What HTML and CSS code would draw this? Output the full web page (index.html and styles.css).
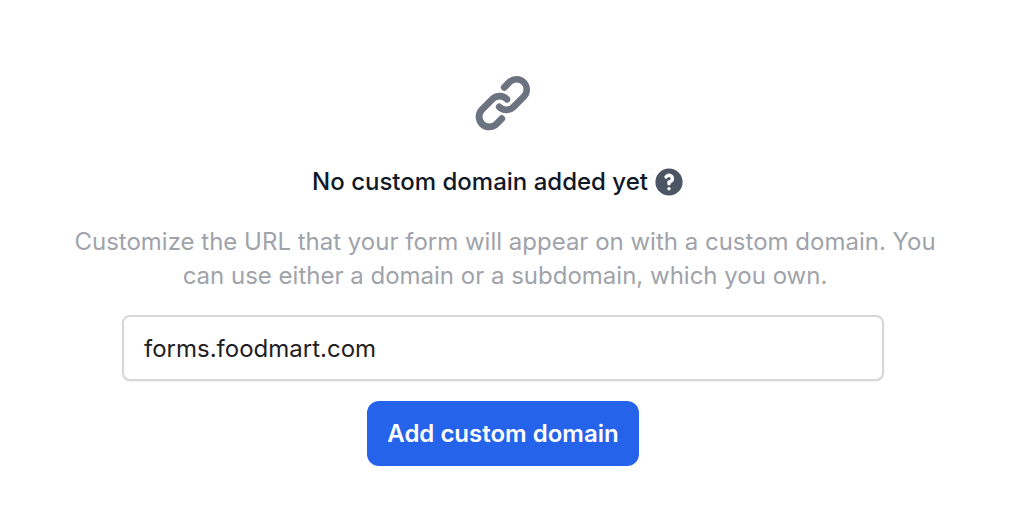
FILE: index.html
```html
<!DOCTYPE html>
<html lang="en">
<head>
<meta charset="utf-8">
<title>Custom domain</title>
<meta name="viewport" content="width=device-width, initial-scale=1">
<link rel="stylesheet" href="styles.css">
</head>
<body>
<main class="empty-state">
  <svg class="link-icon" viewBox="0 0 20 20" aria-hidden="true"><path fill-rule="evenodd" clip-rule="evenodd" d="M12.586 4.586a2 2 0 112.828 2.828l-3 3a2 2 0 01-2.828 0 1 1 0 00-1.414 1.414 4 4 0 005.656 0l3-3a4 4 0 00-5.656-5.656l-1.5 1.5a1 1 0 101.414 1.414l1.5-1.5zm-5 5a2 2 0 012.828 0 1 1 0 101.414-1.414 4 4 0 00-5.656 0l-3 3a4 4 0 105.656 5.656l1.5-1.5a1 1 0 10-1.414-1.414l-1.5 1.5a2 2 0 11-2.828-2.828l3-3z"/></svg>
  <div class="heading">
    <h1 class="title">No custom domain added yet</h1>
    <button class="help" type="button" aria-label="Help">
      <svg class="help-icon" viewBox="0 0 20 20" aria-hidden="true"><path fill-rule="evenodd" clip-rule="evenodd" d="M18 10a8 8 0 11-16 0 8 8 0 0116 0zm-8-3a1 1 0 00-.867.5 1 1 0 11-1.731-1A3 3 0 0113 8a3.001 3.001 0 01-2 2.83V11a1 1 0 11-2 0v-1a1 1 0 011-1 1 1 0 100-2zm0 8a1 1 0 100-2 1 1 0 000 2z"/></svg>
    </button>
  </div>
  <p class="description">Customize the URL that your form will appear on with a custom domain. You can use either a domain or a subdomain, which you own.</p>
  <form class="domain-form">
    <input class="domain-input" type="text" value="forms.foodmart.com" aria-label="Custom domain">
    <button class="submit" type="button">Add custom domain</button>
  </form>
</main>
</body>
</html>
```
FILE: styles.css
```css
* {
  box-sizing: border-box;
}

body {
  margin: 0;
  background: #fff;
  color: #111827;
  font-family: Inter, "Liberation Sans", sans-serif;
  font-size: 24px;
}

.empty-state {
  display: flex;
  flex-direction: column;
  align-items: center;
  max-width: 896px;
  margin: 0 auto;
  padding: 69px 10px 50px 0;
}

.link-icon {
  width: 68px;
  height: 68px;
  fill: #6b7280;
}

.heading {
  display: flex;
  align-items: center;
  gap: 4px;
  margin-top: 27px;
  padding-right: 8px;
}

.title {
  margin: 0;
  font-size: 24px;
  font-weight: 500;
  line-height: 36px;
}

.help {
  display: flex;
  padding: 0;
  border: 0;
  background: none;
}

.help-icon {
  width: 34px;
  height: 34px;
  fill: #4b5563;
}

.description {
  margin: 25px 0 0;
  padding-left: 4px;
  color: #9fa3aa;
  line-height: 34px;
  text-align: center;
}

.domain-form {
  display: flex;
  flex-direction: column;
  align-items: center;
  gap: 20px;
  width: 100%;
  max-width: 762px;
  margin-top: 22px;
}

.domain-input {
  width: 100%;
  height: 66px;
  padding: 0 20px;
  border: 2px solid #d5d6d9;
  border-radius: 8px;
  background: #fff;
  box-shadow: 0 1px 2px rgba(0, 0, 0, 0.05);
  color: #1f2023;
  font: inherit;
}

.submit {
  height: 65px;
  padding: 0 20px;
  border: 0;
  border-radius: 12px;
  background: #2563eb;
  color: #fff;
  font: inherit;
  font-weight: 600;
}
```
